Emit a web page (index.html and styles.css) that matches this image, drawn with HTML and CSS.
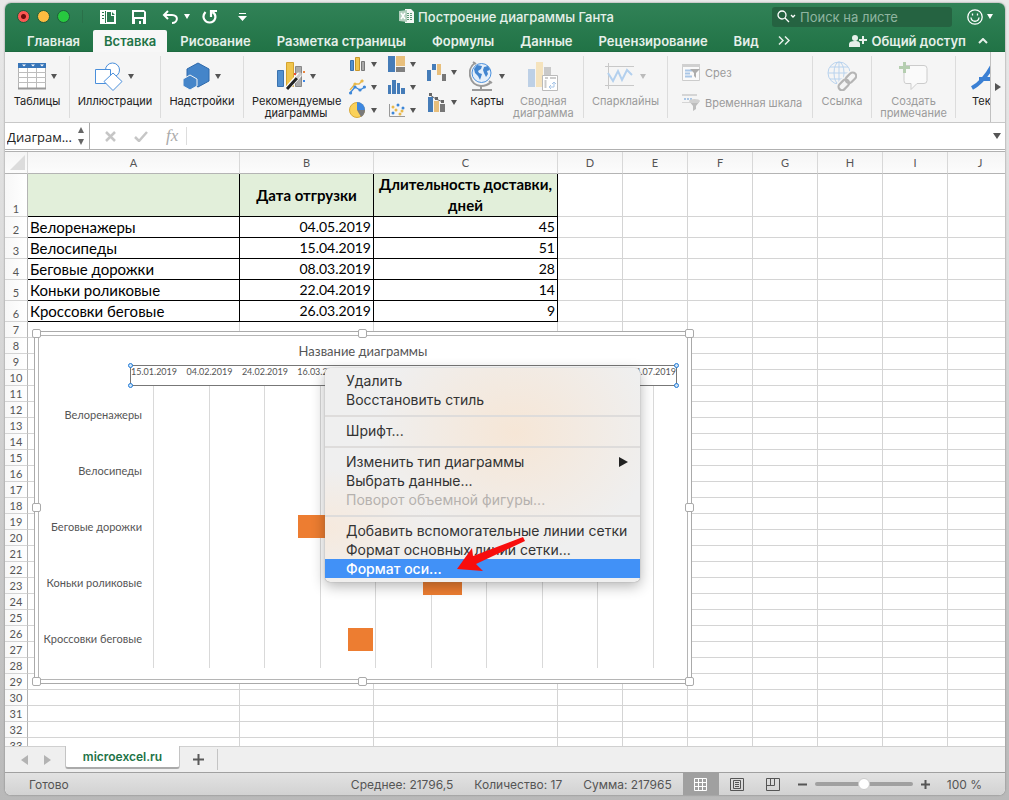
FILE: index.html
```
<!DOCTYPE html>
<html lang="ru">
<head>
  <meta charset="UTF-8">
  <title>Построение диаграммы Ганта</title>
  <link rel="stylesheet" href="styles.css">
</head>
<body>
  <div class="window">
    <header class="titlebar">
      <div class="title-row">
        <div class="title-left">
          <div class="lights">
            <button class="light red" aria-label="Закрыть"></button>
            <button class="light yellow" aria-label="Свернуть"></button>
            <button class="light green" aria-label="Развернуть"></button>
          </div>
          <div class="quick">
            <button aria-label="Вид"><svg width="16" height="14" viewBox="0 0 16 14"><path d="M0 0h16v14H0z" fill="#fff"/><path d="M2 2h2v1H2zM2 5h2v1H2zM2 8h2v1H2zM5 1h1v12H5zM7 2h4v4h3v6H7zM12 2l3 3h-3z" fill="#2c7a51"/></svg></button>
            <button aria-label="Сохранить"><svg width="14" height="14" viewBox="0 0 14 14"><path d="M0 0h12l2 2v12H0z" fill="#fff"/><path d="M2 2h10v5H2zM3 9h8v5H9v-3H7v3H3z" fill="#2c7a51"/></svg></button>
            <button aria-label="Отменить" class="undo"><svg width="17" height="14" viewBox="0 0 17 14" fill="none" stroke="#fff" stroke-width="2"><path d="M6 1L2 5l4 4M2 5h8c7 0 6 8 0 8"/></svg><i class="caret light-caret"></i></button>
            <button aria-label="Повторить"><svg width="16" height="15" viewBox="0 0 16 15" fill="none" stroke="#fff" stroke-width="2.200"><path d="M3.500 3C-1 8 3 13.500 7.500 13.500c6 0 8-7 3-10.500M9 8V2h6"/></svg></button>
            <button aria-label="Настроить панель"><svg width="9" height="8" viewBox="0 0 9 8"><path d="M1 0h7v1H1zM0 3h9L4.500 8z" fill="#fff"/></svg></button>
          </div>
        </div>
        <h1 class="doc-title"><svg width="15" height="15" viewBox="0 0 15 15"><path d="M6 0h6l3 3v11H6z" fill="#f4f8f5"/><path d="M8 4h2v1H8zM11 4h2v1h-2zM8 6h2v1H8zM11 6h2v1h-2zM8 8h2v1H8zM11 8h2v1h-2zM8 10h2v1H8zM11 10h2v1h-2z" fill="#5b9a77"/><path d="M0 2l8-1v12l-8-1z" fill="#b3d0bf"/><path d="M2 4l4 6M6 4l-4 6" stroke="#fff" stroke-width="1.500"/></svg>Построение диаграммы Ганта</h1>
        <div class="title-right">
          <label class="search">
            <svg width="20" height="13" viewBox="0 0 20 13" fill="none" stroke="#fff" stroke-width="1.300"><circle cx="5" cy="5" r="4"/><path d="M8 8l4 4M14 5l2 2 2-2"/></svg>
            <input type="text" placeholder="Поиск на листе" aria-label="Поиск на листе">
          </label>
          <button class="smile" aria-label="Отзыв"><svg width="16" height="16" viewBox="0 0 16 16" fill="none" stroke="#fff" stroke-width="1.300"><circle cx="8" cy="8" r="7.200"/><path d="M4 8.500c.5 5 7.500 5 8 0M5.500 4.500v2M10.500 4.500v2"/></svg><i class="caret light-caret"></i></button>
        </div>
      </div>
      <nav class="tabs">
        <button>Главная</button>
        <button class="active">Вставка</button>
        <button>Рисование</button>
        <button>Разметка страницы</button>
        <button>Формулы</button>
        <button>Данные</button>
        <button>Рецензирование</button>
        <button>Вид</button>
        <button class="more" aria-label="Ещё"><svg width="13" height="9" viewBox="0 0 13 9" fill="none" stroke="#e6f0ea" stroke-width="1.500"><path d="M1 0.500l4 4-4 4M7 0.500l4 4-4 4"/></svg></button>
        <button class="share"><svg width="18" height="12" viewBox="0 0 18 12" fill="#e6f0ea"><circle cx="6" cy="3" r="3"/><path d="M0 12V9c0-2 2-3 6-3s5 1 5 3v3zM13 1h2v3h3v2h-3v3h-2V6h-3V4h3z"/></svg>Общий доступ</button>
        <button class="collapse" aria-label="Свернуть ленту"><svg width="10" height="6" viewBox="0 0 10 6" fill="none" stroke="#e6f0ea" stroke-width="2"><path d="M1 5l4-4 4 4"/></svg></button>
      </nav>
    </header>

    <div class="ribbon">
      <div class="group g-tables">
        <button class="tool">
          <span class="pic"><svg width="28" height="27" viewBox="0 0 28 27"><path d="M.5 .5h27v25H.5z" fill="#fff" stroke="#b4b4b4"/><path d="M0 9.500h28M0 14.500h28M0 19.500h28M9.500 5v20M18.500 5v20" stroke="#bdbdbd"/><path d="M0 25.500h28" stroke="#999" stroke-width="2"/><path d="M0 0h28v5H0z" fill="#3875b8"/><path d="M4 1.500h4l-2 2zM13 1.500h4l-2 2zM22 1.500h4l-2 2z" fill="#fff"/></svg><i class="caret"></i></span>
          Таблицы
        </button>
      </div>
      <div class="group g-art">
        <button class="tool">
          <span class="pic"><svg width="28" height="29" viewBox="0 0 28 29" fill="#fff" stroke="#4a8fdb"><circle cx="17.500" cy="8" r="7"/><path d="M.5 7.500h15v14H.5z"/><path d="M18 11l9 8.500-9 9-9-9z"/></svg><i class="caret"></i></span>
          Иллюстрации
        </button>
      </div>
      <div class="group g-addins">
        <button class="tool">
          <span class="pic"><svg width="27" height="28" viewBox="0 0 27 28" fill="#4585c9" stroke="#2e69ab"><path d="M15 1l11 6v12l-11 6-11-6V7z"/><path d="M7 13l7 4v7l-7 4-7-4v-7z" stroke="#f5f5f5"/></svg><i class="caret"></i></span>
          Надстройки
        </button>
      </div>
      <div class="group g-charts">
        <button class="tool wide">
          <span class="pic"><svg width="28" height="28" viewBox="0 0 28 28"><path d="M.5 8.500h6v16h-6z" fill="#5290cf" stroke="#3a72ae"/><path d="M9.500 .5h7v24h-7z" fill="#f0c54d" stroke="#d5a32e"/><path d="M18.500 4.500h6v20h-6z" fill="#a9a9a9" stroke="#888"/><path d="M10 27L23 12" stroke="#fff" stroke-width="5"/><path d="M10 27L20 16" stroke="#222" stroke-width="3"/><path d="M20 16l4-5" stroke="#ccc" stroke-width="3"/><path d="M17 11h2v2h-2z" fill="#e84c3d"/><path d="M26 9h2v2h-2z" fill="#e8843d"/><path d="M26 18h2v2h-2z" fill="#3d87e8"/></svg><i class="caret"></i></span>
          Рекомендуемые<br>диаграммы
        </button>
        <div class="mini-col">
          <button class="mini" aria-label="Гистограмма"><svg width="17" height="16" viewBox="0 0 17 16"><path d="M1.500 4.500h3v10h-3z" fill="#5290cf" stroke="#3a72ae"/><path d="M6.500 1.500h4v13h-4z" fill="#f0c54d" stroke="#c9962a"/><path d="M12.500 5.500h3v9h-3z" fill="#a9a9a9" stroke="#777"/></svg><i class="caret"></i></button>
          <button class="mini" aria-label="График"><svg width="17" height="16" viewBox="0 0 17 16" fill="none" stroke-width="1.300"><path d="M1 11l5-6h4l4-4" stroke="#e9b949"/><path d="M1 14l5-6 5 3 5-3" stroke="#3d87d8"/><g fill="#e9b949"><circle cx="6" cy="5" r="1.600"/><circle cx="13" cy="2" r="1.600"/></g><g fill="#3d87d8"><circle cx="1.600" cy="14" r="1.600"/><circle cx="6" cy="8" r="1.600"/><circle cx="11" cy="11" r="1.600"/><circle cx="15.400" cy="8" r="1.600"/></g></svg><i class="caret"></i></button>
          <button class="mini" aria-label="Круговая"><svg width="17" height="16" viewBox="0 0 17 16"><circle cx="8" cy="8" r="7.500" fill="#fad15a" stroke="#d8a93a"/><path d="M8 8V0a8 8 0 0 1 8 8z" fill="#3d87e0"/><path d="M8 8h8a8 8 0 0 1-4 7z" fill="#7a7a7a"/></svg><i class="caret"></i></button>
        </div>
        <div class="mini-col">
          <button class="mini" aria-label="Иерархическая"><svg width="17" height="16" viewBox="0 0 17 16"><path d="M0 0h7v16H0z" fill="#457cb8"/><path d="M8 0h9v10H8z" fill="#e8bf7c"/><path d="M8 11h9v5H8z" fill="#808080"/></svg><i class="caret"></i></button>
          <button class="mini" aria-label="Статистическая"><svg width="17" height="16" viewBox="0 0 17 16" fill="#457cb8"><path d="M0 6h3v9H0zM4 1h4v14H4zM9 4h3v11H9zM13 9h4v6h-4z"/></svg><i class="caret"></i></button>
          <button class="mini" aria-label="Точечная"><svg width="17" height="16" viewBox="0 0 17 16"><path d="M1.500 2v12.500H17" fill="none" stroke="#999"/><g fill="#e9b949"><circle cx="5" cy="5" r="1.500"/><circle cx="8" cy="8" r="1.500"/><circle cx="14" cy="9" r="1.500"/><circle cx="12" cy="12" r="1.500"/></g><g fill="#3d87d8"><circle cx="10" cy="3" r="1.500"/><circle cx="15" cy="6" r="1.500"/><circle cx="5" cy="11" r="1.500"/></g></svg><i class="caret"></i></button>
        </div>
        <div class="mini-col two">
          <button class="mini" aria-label="Каскадная"><svg width="19" height="17" viewBox="0 0 19 17"><path d="M0 6h4v11H0zM5 0h4v6H5z" fill="#457cb8"/><path d="M10 0h4v11h-4z" fill="#e8bf7c"/><path d="M15 10h4v7h-4z" fill="#777"/></svg><i class="caret"></i></button>
          <button class="mini" aria-label="Комбинированная"><svg width="19" height="19" viewBox="0 0 19 19"><path d="M1 4h5v15H1z" fill="#457cb8"/><path d="M7 8h5v11H7z" fill="#e8bf7c"/><path d="M13 11h5v8h-5z" fill="#777"/><path d="M3 2l6 4 7 3" stroke="#666" fill="none"/><path d="M2 0h3v3H2zM8 4h3v3H8zM14 7h3v3h-3z" fill="#666"/></svg><i class="caret"></i></button>
        </div>
        <button class="tool maps">
          <span class="pic"><svg width="25" height="30" viewBox="0 0 25 30" fill="none"><path d="M6 2C-3 8 0 24 12 25c5 0 8-2 10-4M4 1l3 2M20 20l3 2" stroke="#999" stroke-width="2"/><path d="M12 25v3M3 29h20" stroke="#999" stroke-width="2"/><circle cx="12.500" cy="12" r="9.500" fill="#e5effa" stroke="#4a90dd"/><path d="M5 8l3-4 5 1-1 3-3 2 1 2 3 1-2 6-2-4-3-3zM15 6l4-1 2 4-3 1 1 3-2 3-2-4-1-3z" fill="#4386d0"/></svg><i class="caret"></i></span>
          Карты
        </button>
        <button class="tool pivot" disabled>
          <span class="pic"><svg width="30" height="29" viewBox="0 0 30 29"><path d="M0 7h7v18H0z" fill="#bdd0e6"/><path d="M8 0h7v25H8z" fill="#f5e3bd"/><path d="M16 5h7v8h-7z" fill="#c9c9c9"/><path d="M14.500 13.500h15v15h-15z" fill="#fff" stroke="#bbb"/><path d="M17 16h3M22 16h6M17.500 18v8" stroke="#ccc" stroke-width="2"/><path d="M21 25h5v-5M23 23l-2 2 2 2M24 22l2-2 2 2" fill="none" stroke="#a8c6e8"/></svg></span>
          Сводная<br>диаграмма
        </button>
      </div>
      <div class="group g-spark">
        <button class="tool" disabled>
          <span class="pic"><svg width="30" height="27" viewBox="0 0 30 27" fill="none"><path d="M0 3.500h29M0 22.500h29M3.500 0v26" stroke="#c8c8c8"/><path d="M3 10l5 8 5-10 4 9 5-10 5 5" stroke="#b3d0ee" stroke-width="2"/></svg><i class="caret"></i></span>
          Спарклайны
        </button>
      </div>
      <div class="group g-filter">
        <button class="row-tool" disabled><svg width="18" height="17" viewBox="0 0 18 17"><path d="M.5 .5h17v16H.5z" fill="#fafafa" stroke="#ccc"/><path d="M0 0h18v3H0z" fill="#d0d0d0"/><path d="M3 6.500h7M3 9.500h5M3 12.500h7" stroke="#a9c6e6" stroke-width="2"/><path d="M8 5h10l-4 4v5l-2-2V9z" fill="#adadad"/></svg>Срез</button>
        <button class="row-tool" disabled><svg width="18" height="17" viewBox="0 0 18 17"><path d="M0 0h15v2H0z" fill="#d5d5d5"/><path d="M2 4h2v2H2zM5 4h2v2H5zM8 4h2v2H8z" fill="#a9c6e6"/><path d="M0 8h8v1H0z" fill="#d5d5d5"/><path d="M7 7c1 2 10 2 11 0l-4 5v3l-3 2v-5z" fill="#bdbdbd"/><ellipse cx="12.500" cy="7" rx="5.500" ry="2" fill="#d0d0d0"/></svg>Временная шкала</button>
      </div>
      <div class="group g-link">
        <button class="tool" disabled>
          <span class="pic"><svg width="30" height="30" viewBox="0 0 30 30" fill="none" stroke="#b9d3ee"><circle cx="12" cy="12" r="11"/><ellipse cx="12" cy="12" rx="5" ry="11"/><path d="M1 12h22M3 6h18M3 18h18M12 1v22"/><g transform="rotate(-45 20 20)" stroke="#f5f5f5" stroke-width="5"><rect x="9" y="17" width="12" height="7" rx="3.500"/><rect x="19" y="17" width="12" height="7" rx="3.500"/></g><g transform="rotate(-45 20 20)" stroke="#b5b5b5" stroke-width="2.200"><rect x="9" y="17" width="12" height="7" rx="3.500"/><rect x="19" y="17" width="12" height="7" rx="3.500"/></g></svg></span>
          Ссылка
        </button>
      </div>
      <div class="group g-note">
        <button class="tool" disabled>
          <span class="pic"><svg width="29" height="28" viewBox="0 0 29 28" fill="none"><path d="M7 3.500h18q3 0 3 3v12q0 3-3 3h-7l-6 6v-6H7q-2 0-2-3v-9" fill="#fafafa" stroke="#ccc"/><path d="M5.500 0v11M0 5.500h11" stroke="#b5ceb0" stroke-width="3"/></svg></span>
          Создать<br>примечание
        </button>
      </div>
      <div class="group g-text">
        <button class="tool">
          <span class="pic"><svg width="32" height="28" viewBox="0 0 32 28" fill="none" stroke="#3b80d4" stroke-width="4"><path d="M1 26C10 21 17 12 22 2c-1 9-1 16 1 24M8 17h15"/></svg></span>
          Текст
        </button>
      </div>
      <button class="ribbon-next" aria-label="Далее"><i class="tri-right"></i></button>
    </div>

    <div class="formula">
      <div class="namebox">
        <input type="text" value="Диаграм..." aria-label="Имя">
        <span class="stepper"><i class="tri-up"></i><i class="caret big"></i></span>
      </div>
      <button aria-label="Отмена"><svg width="11" height="11" viewBox="0 0 11 11"><path d="M1 1l9 9M10 1l-9 9" stroke="#c6c6c6" stroke-width="2.500"/></svg></button>
      <button aria-label="Ввод"><svg width="14" height="11" viewBox="0 0 14 11"><path d="M1 6l4 4 8-9" fill="none" stroke="#c6c6c6" stroke-width="2.500"/></svg></button>
      <button class="fx">fx</button>
      <input class="formula-input" type="text" aria-label="Строка формул">
      <button class="expand" aria-label="Развернуть строку"><i class="caret big"></i></button>
    </div>

    <main class="sheet">
      <table class="grid">
        <colgroup>
          <col class="c-head"><col class="c-a"><col class="c-b"><col class="c-c">
          <col class="c-x"><col class="c-x"><col class="c-x"><col class="c-x"><col class="c-x"><col class="c-x"><col class="c-x">
        </colgroup>
        <thead>
          <tr><th class="corner"><svg width="15" height="15" viewBox="0 0 15 15"><path d="M15 0v15H0z" fill="#dcdcdc"/></svg></th><th>A</th><th>B</th><th>C</th><th>D</th><th>E</th><th>F</th><th>G</th><th>H</th><th>I</th><th>J</th></tr>
        </thead>
        <tbody id="rows"></tbody>
      </table>

      <section class="chart">
        <div class="chart-area">
          <h2>Название диаграммы</h2>
          <div class="axis">
            <span>15.01.2019</span><span>04.02.2019</span><span>24.02.2019</span><span>16.03.2019</span><span></span><span></span><span></span><span></span><span></span><span>14.07.2019</span>
            <i class="dot tl"></i><i class="dot tr"></i><i class="dot bl"></i><i class="dot br"></i>
          </div>
          <div class="chart-body">
            <div class="names" id="names"></div>
            <div class="plot" id="plot">
              <div class="lines"><i></i><i></i><i></i><i></i><i></i><i></i><i></i><i></i><i></i><i></i></div>
            </div>
          </div>
        </div>
        <i class="handle tl"></i><i class="handle tc"></i><i class="handle tr"></i>
        <i class="handle ml"></i><i class="handle mr"></i>
        <i class="handle bl"></i><i class="handle bc"></i><i class="handle br"></i>
      </section>

      <div class="menu">
        <button>Удалить</button>
        <button>Восстановить стиль</button>
        <hr>
        <button>Шрифт...</button>
        <hr>
        <button class="sub">Изменить тип диаграммы<i class="tri-right dark"></i></button>
        <button>Выбрать данные...</button>
        <button disabled>Поворот объемной фигуры...</button>
        <hr>
        <button>Добавить вспомогательные линии сетки</button>
        <button>Формат основных линий сетки...</button>
        <button class="selected">Формат оси...</button>
      </div>
      <svg class="pointer" width="70" height="36" viewBox="0 0 70 36"><path d="M0 32L15 11l1 8L66 0l2 4-49 23 7 7z" fill="#f80d0d"/></svg>
    </main>

    <div class="sheet-tabs">
      <button class="nav" aria-label="Назад"><i class="tri-left"></i></button>
      <button class="nav" aria-label="Вперёд"><i class="tri-right"></i></button>
      <button class="sheet-tab">microexcel.ru</button>
      <button class="add" aria-label="Добавить лист"><svg width="11" height="11" viewBox="0 0 11 11"><path d="M5.500 0v11M0 5.500h11" stroke="#5a5a5a" stroke-width="2"/></svg></button>
    </div>

    <footer class="status">
      <span class="ready">Готово</span>
      <span>Среднее: 21796,5</span>
      <span>Количество: 17</span>
      <span>Сумма: 217965</span>
      <div class="views">
        <button class="on" aria-label="Обычный"><svg width="13" height="13" viewBox="0 0 13 13" fill="none" stroke="#fff"><path d="M.5 .5h12v12H.5zM4.500 0v13M8.500 0v13M0 4.500h13M0 8.500h13"/></svg></button>
        <button aria-label="Разметка"><svg width="14" height="13" viewBox="0 0 14 13" fill="none" stroke="#555"><path d="M.5 .5h13v12H.5zM3.500 2.500h7v8h-7zM5 4.500h4M5 6.500h4M5 8.500h4"/></svg></button>
        <button aria-label="Страничный"><svg width="14" height="13" viewBox="0 0 14 13" fill="none" stroke="#555"><path d="M.5 .5h13v12H.5zM.5 7.500h8v-7M4.500 .5v7"/></svg></button>
      </div>
      <button class="zoom" aria-label="Уменьшить"><svg width="9" height="9" viewBox="0 0 9 9"><path d="M0 4.500h9" stroke="#555" stroke-width="2"/></svg></button>
      <input class="slider" type="range" min="0" max="100" value="50" aria-label="Масштаб">
      <button class="zoom" aria-label="Увеличить"><svg width="9" height="9" viewBox="0 0 9 9"><path d="M0 4.500h9M4.500 0v9" stroke="#555" stroke-width="2"/></svg></button>
      <span class="percent">100 %</span>
    </footer>
  </div>

  <script>
    const data = [
      // name, date, duration, days since 15.01.2019
      ['Велоренажеры', '04.05.2019', 45, 109],
      ['Велосипеды', '15.04.2019', 51, 90],
      ['Беговые дорожки', '08.03.2019', 28, 52],
      ['Коньки роликовые', '22.04.2019', 14, 97],
      ['Кроссовки беговые', '26.03.2019', 9, 70]
    ];
    const total = 180;
    const empty = '<td></td>'.repeat(7);

    let html = '<tr class="head"><th>1</th><td></td><td>Дата отгрузки</td><td>Длительность доставки, дней</td>' + empty + '</tr>';
    data.forEach((d, i) => {
      html += `<tr class="data"><th>${i + 2}</th><td>${d[0]}</td><td>${d[1]}</td><td>${d[2]}</td>${empty}</tr>`;
    });
    for (let n = 7; n <= 33; n++) {
      html += `<tr><th>${n}</th><td></td><td></td><td></td>${empty}</tr>`;
    }
    document.getElementById('rows').innerHTML = html;

    const names = document.getElementById('names');
    const plot = document.getElementById('plot');
    data.forEach(d => {
      names.insertAdjacentHTML('beforeend', `<span>${d[0]}</span>`);
      plot.insertAdjacentHTML('beforeend',
        `<div class="track"><div class="bar" style="margin-left:${d[3] / total * 100}%;width:${d[2] / total * 100}%"></div></div>`);
    });
  </script>
</body>
</html>
```
FILE: styles.css
```
* { box-sizing: border-box; }
body {
  margin: 0;
  height: 100vh;
  padding: 3px 4px 5px 5px;
  background: linear-gradient(#e9e9e9, #d8d8d8 40%, #b9b9b9);
  font-family: Inter, "Liberation Sans", sans-serif;
  font-size: 12px;
  color: #222;
  overflow: hidden;
}
button { border: 0; background: none; padding: 0; font: inherit; color: inherit; }
input { border: 0; background: none; padding: 0; font: inherit; color: inherit; outline: 0; min-width: 0; }
svg { display: block; flex: none; }

.window {
  height: 100%;
  display: flex;
  flex-direction: column;
  background: #fff;
  border-radius: 6px;
  overflow: hidden;
  box-shadow: 0 0 2px #777;
}

/* small triangles */
.caret { display: block; border: 3px solid transparent; border-top: 5px solid #555; border-bottom: 0; }
.caret.big { border-width: 4px; border-top-width: 6px; border-bottom: 0; }
.caret.light-caret { border-top-color: #fff; }
.tri-up { border: 3px solid transparent; border-bottom: 6px solid #666; border-top: 0; }
.tri-right { border: 4px solid transparent; border-left: 6px solid #555; border-right: 0; }
.tri-left { border: 5px solid transparent; border-right: 7px solid #b3b3b3; border-left: 0; }
.tri-right.dark { border-width: 5px; border-left: 9px solid #222; border-right: 0; }

/* title bar */
.titlebar { flex: none; background: linear-gradient(#318257, #217346); color: #e6f0ea; border-bottom: 1px solid #1e6a40; }
.title-row { display: grid; grid-template-columns: 1fr auto 1fr; align-items: center; height: 27px; }
.title-left { display: flex; align-items: center; padding-left: 12px; }
.lights { display: flex; gap: 7px; padding-right: 12px; border-right: 1px solid #2a7049; }
.light { width: 13px; height: 13px; border-radius: 50%; border: 1px solid #1d5c3a; }
.red { background: radial-gradient(circle, #6d0b0b 2px, #fc5753 3px); }
.yellow { background: #fdbc40; }
.green { background: #27c93f; }
.quick { display: flex; align-items: center; gap: 16px; padding-left: 17px; }
.quick .undo { display: flex; align-items: center; gap: 5px; margin-right: -4px; }
.quick button:last-child { margin-left: 4px; }
.doc-title { margin: 0; padding-left: 3px; display: flex; align-items: center; gap: 4px; font-size: 13px; font-weight: 500; }
.title-right { display: flex; align-items: center; justify-content: flex-end; gap: 15px; padding-right: 12px; }
.search { display: flex; align-items: center; gap: 3px; width: 180px; height: 20px; padding-left: 5px; border-radius: 3px; background: #256341; }
.search input { flex: 1; font-size: 13px; }
.search input::placeholder { color: #8fb5a0; opacity: 1; }
.smile { display: flex; align-items: center; gap: 4px; }

.tabs { display: flex; height: 21px; padding-left: 9px; font-size: 13px; font-weight: 600; }
.tabs button { padding: 0 13px; white-space: nowrap; line-height: 20px; }
.tabs .active { padding: 0 11px; height: 22px; background: #f7f7f7; color: #217346; border-radius: 2px 2px 0 0; }
.tabs .more { padding: 0 6px; }
.tabs .share { margin-left: auto; padding: 0 12px 0 0; display: flex; align-items: center; gap: 4px; }
.tabs .collapse { padding: 0 17px 0 0; }

/* ribbon */
.ribbon { flex: none; display: flex; height: 71px; background: #f5f5f5; border-bottom: 1px solid #c8c8c8; font-size: 11px; line-height: 12px; }
.group { flex: none; display: flex; justify-content: center; margin: 4px 0; height: 62px; border-right: 1px solid #dcdcdc; }
.g-tables { width: 65px; }
.g-art { width: 91px; }
.g-addins { width: 83px; }
.g-charts { width: 340px; justify-content: flex-start; padding-left: 8px; }
.g-spark { width: 84px; }
.g-filter { width: 145px; flex-direction: column; justify-content: flex-start; gap: 13px; padding: 8px 0 0 14px; }
.g-link { width: 59px; }
.g-note { width: 84px; }
.g-text { flex: 1; min-width: 0; justify-content: flex-start; padding-left: 15px; border: 0; overflow: hidden; }
.tool { flex: none; display: block; text-align: center; white-space: nowrap; align-self: flex-start; }
.tool:disabled, .row-tool:disabled { color: #9b9b9b; }
.pic { display: flex; align-items: center; justify-content: center; gap: 5px; height: 30px; margin: 5px 0 4px; }
.tool:disabled .caret { border-top-color: #bbb; }
.wide { width: 88px; }
.mini-col { display: flex; flex-direction: column; gap: 7px; margin-left: 9px; }
.mini-col + .mini-col { margin-left: 11px; }
.mini-col.two { gap: 14px; padding-top: 8px; }
.mini { display: flex; align-items: center; gap: 5px; height: 16px; }
.maps { margin-left: 12px; }
.pivot { margin-left: 8px; }
.row-tool { display: flex; align-items: center; gap: 5px; height: 17px; white-space: nowrap; }
.ribbon-next { flex: none; width: 15px; border-left: 1px solid #c0c0c0; display: flex; align-items: center; padding-left: 4px; }

/* formula bar */
.formula { flex: none; display: flex; align-items: center; height: 29px; border-bottom: 3px double #b0b0b0; }
.namebox { display: flex; align-items: center; width: 85px; height: 26px; margin-right: 15px; padding-right: 5px; border-right: 1px solid #aaa; }
.namebox input { flex: 1; padding: 2px 0 0 2px; font-family: "Open Sans", sans-serif; font-size: 13px; }
.stepper { display: flex; flex-direction: column; align-items: center; gap: 6px; }
.stepper .caret { border-width: 3px; border-top-width: 6px; border-bottom: 0; border-top-color: #666; }
.formula button { margin-right: 18px; }
.formula .fx { padding-right: 8px; margin: 0; border-right: 1px solid #ddd; font: italic 17px/18px "Liberation Serif", serif; color: #aaa; }
.formula-input { flex: 1; height: 20px; padding-left: 8px; }
.formula .expand { margin-right: 4px; }

/* sheet */
.sheet { flex: 1; position: relative; overflow: hidden; min-height: 0; font-family: "Lato", "Open Sans", sans-serif; }
.grid { table-layout: fixed; width: 1008px; border-collapse: separate; border-spacing: 0; }
.c-head { width: 23px; }
.c-a { width: 212px; }
.c-b { width: 134px; }
.c-c { width: 184px; }
.c-x { width: 65px; }
.grid th, .grid td { height: 16px; padding: 0; border-right: 1px solid #d4d4d4; border-bottom: 1px solid #d4d4d4; line-height: 15px; }
.grid th { font-size: 11px; font-weight: 400; color: #555; background: linear-gradient(90deg, #f7f7f7, #fff); border-right-color: #b4b4b4; vertical-align: bottom; }
.grid thead th { height: 22px; vertical-align: middle; background: linear-gradient(#f5f5f5, #fcfcfc); border-color: #d8d8d8; border-bottom-color: #b4b4b4; }
.grid .corner { padding-left: 5px; }
.grid .head td { height: 43px; font-size: 15px; line-height: 21px; font-weight: 700; text-align: center; }
.grid .data td, .grid .data th { height: 21px; }
.data td { font-size: 15px; }
.grid .data td { line-height: 20px; }
.head td:nth-child(-n+4), .data td:nth-child(-n+4) { color: #000; border-color: #000; }
.head td:nth-child(-n+4) { background: #e2efda; }
.data td:nth-child(2) { padding-left: 2px; }
.data td:nth-child(3), .data td:nth-child(4) { text-align: right; padding-right: 2px; font-size: 14px; }

/* chart */
.chart { position: absolute; left: 29px; top: 179px; width: 658px; height: 353px; padding: 3px; background: #fff; border: 1px solid #aaa; color: #555; }
.chart-area { height: 100%; border: 1px solid #b5b5b5; }
.chart h2 { margin: 0; height: 29px; line-height: 30px; font-size: 13px; font-weight: 400; text-align: center; }
.axis { position: relative; display: flex; justify-content: space-between; width: 547px; height: 21px; margin-left: 91px; border: 1px solid #777; font-size: 9px; line-height: 12px; }
.axis span { width: 46px; text-align: center; white-space: nowrap; }
.chart-body { display: flex; height: 282px; }
.names { display: grid; width: 103px; margin-right: 11px; padding-bottom: 2px; align-items: center; text-align: right; font-size: 11px; white-space: nowrap; }
.plot { position: relative; display: grid; width: 501px; }
.lines { position: absolute; inset: 0; display: flex; justify-content: space-between; }
.lines i { width: 1px; background: #d9d9d9; }
.track { position: relative; display: flex; align-items: center; }
.bar { height: 23px; background: #ed7d31; }

.handle { position: absolute; width: 9px; height: 9px; background: #fff; border: 1px solid #aaa; border-radius: 2px; }
.handle.tl, .handle.tc, .handle.tr { top: -3px; }
.handle.bl, .handle.bc, .handle.br { bottom: -3px; }
.handle.tl, .handle.ml, .handle.bl { left: -3px; }
.handle.tr, .handle.mr, .handle.br { right: -3px; }
.handle.tc, .handle.bc { left: calc(50% - 5px); }
.handle.ml, .handle.mr { top: calc(50% - 5px); }
.dot { position: absolute; width: 5px; height: 5px; border: 1px solid #1f7ad6; border-radius: 50%; background: #cfe4f8; }
.dot.tl, .dot.tr { top: -3px; }
.dot.bl, .dot.br { bottom: -3px; }
.dot.tl, .dot.bl { left: -3px; }
.dot.tr, .dot.br { right: -3px; }

/* context menu */
.menu {
  position: absolute;
  left: 320px;
  top: 216px;
  width: 315px;
  padding: 3px 0 4px;
  display: flex;
  flex-direction: column;
  font: 14px/19px Inter, sans-serif;
  color: #333;
  /* warm glow of the bars behind the menu */
  background:
    radial-gradient(ellipse 140px 120px at 190px 65px, #f6e6d6, transparent),
    radial-gradient(ellipse 110px 60px at 0 160px, #f6e9dd, transparent),
    #efefef;
  border-radius: 5px;
  box-shadow: 0 0 1px #777, 0 4px 14px rgba(0, 0, 0, 0.3);
}
.menu button { height: 19px; padding: 0 12px 0 21px; text-align: left; white-space: nowrap; }
.menu .sub { display: flex; align-items: center; justify-content: space-between; }
.menu button:disabled { color: #b5b1ae; }
.menu .selected { background: #4191f7; color: #fff; font-weight: 500; }
.menu hr { width: 100%; height: 2px; margin: 6px 0 4px; border: 0; background: #dedcdb; }
.pointer { position: absolute; left: 452px; top: 385px; }

/* sheet tabs */
.sheet-tabs { flex: none; display: flex; height: 26px; padding-left: 8px; background: #efefef; border-top: 1px solid #d0d0d0; }
.nav { width: 23px; display: flex; align-items: center; justify-content: center; }
.nav .tri-right { border-width: 5px; border-left: 7px solid #b3b3b3; border-right: 0; }
.sheet-tab { width: 115px; height: 23px; margin: -1px 0 0 6px; background: #fff; border: 1px solid #c4c4c4; border-top: 0; border-bottom: 2px solid #aaa; border-radius: 0 0 3px 3px; font-weight: 600; color: #217346; }
.add { width: 38px; height: 21px; margin-top: 2px; border-right: 1px solid #c4c4c4; display: flex; align-items: center; justify-content: center; }

/* status bar */
.status { flex: none; display: flex; align-items: center; height: 23px; border-top: 1px solid #a0a0a0; background: linear-gradient(#e2e2e2, #d2d2d2); color: #555; white-space: nowrap; }
.status span { margin-right: 21px; }
.status .ready { margin: 0 auto 0 24px; }
.views { display: flex; height: 100%; margin: 0 7px 0 -10px; }
.views button { width: 36px; display: flex; align-items: center; justify-content: center; }
.views .on { background: #a0a0a0; }
.slider { -webkit-appearance: none; width: 98px; height: 14px; margin: 0 8px; }
.slider::-webkit-slider-runnable-track { height: 4px; border-radius: 2px; background: #a0a0a0; }
.slider::-webkit-slider-thumb { -webkit-appearance: none; width: 12px; height: 12px; margin-top: -4px; border-radius: 50%; background: #fff; border: 1px solid #ccc; }
.status .percent { margin: 0 23px 0 17px; }
```
